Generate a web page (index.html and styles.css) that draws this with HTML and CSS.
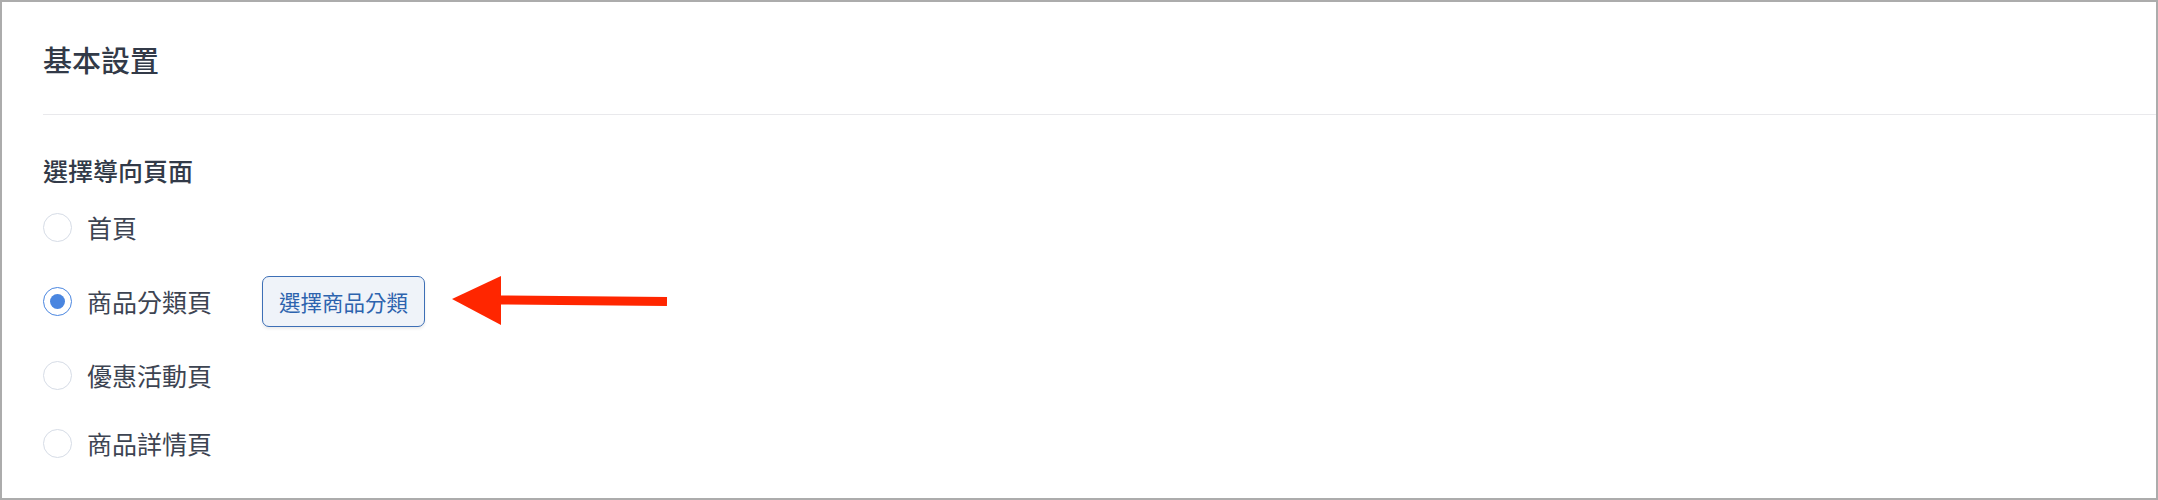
FILE: index.html
```html
<!DOCTYPE html>
<html lang="zh-Hant">
<head>
    <meta charset="UTF-8">
    <meta name="viewport" content="width=device-width, initial-scale=1.0">
    <title>基本設置</title>
    <link rel="stylesheet" href="styles.css">
</head>
<body>
    <div class="panel">
        <div class="panel-header">
            <h2>基本設置</h2>
        </div>

        <div class="panel-body">
            <div class="field-label">選擇導向頁面</div>

            <div class="radio-list">
                <label class="radio-row">
                    <span class="radio"></span>
                    <span class="radio-text">首頁</span>
                </label>
                <label class="radio-row">
                    <span class="radio checked"></span>
                    <span class="radio-text">商品分類頁</span>
                    <button class="pick-btn" type="button">選擇商品分類</button>
                </label>
                <label class="radio-row">
                    <span class="radio"></span>
                    <span class="radio-text">優惠活動頁</span>
                </label>
                <label class="radio-row">
                    <span class="radio"></span>
                    <span class="radio-text">商品詳情頁</span>
                </label>
            </div>
        </div>

        <!-- 紅色箭頭標示 -->
        <svg class="pointer" width="230" height="60" viewBox="0 0 230 60">
            <polygon points="2,27 51,4 51,53" fill="#ff2600" />
            <line x1="48" y1="28" x2="217" y2="29.5" stroke="#ff2600" stroke-width="9" />
        </svg>
    </div>
</body>
</html>
```

FILE: styles.css
```css
* {
    box-sizing: border-box;
}

body {
    margin: 0;
    font-family: "Noto Sans CJK TC", "Noto Sans", sans-serif;
    background-color: #ffffff;
    color: #333b4a;
}

.panel {
    position: relative;
    height: 500px;
    border: 2px solid #acacac;
    background-color: #ffffff;
    overflow: hidden;
}

.panel-header {
    margin-left: 41px;
    padding: 43px 0 40px;
    border-bottom: 1px solid #e9e9ec;
}

.panel-header h2 {
    margin: 0;
    font-size: 29px;
    line-height: 29px;
    font-weight: 500;
    color: #323a48;
}

.panel-body {
    padding: 43px 0 0 41px;
}

.field-label {
    font-size: 25px;
    line-height: 25px;
    font-weight: 500;
    color: #323a48;
    margin-bottom: 25px;
}

.radio-list {
    display: flex;
    flex-direction: column;
    gap: 29px;
}

.radio-row {
    display: flex;
    align-items: center;
    min-height: 39px;
    cursor: pointer;
}

.radio {
    width: 29px;
    height: 29px;
    border-radius: 50%;
    border: 1px solid #d6dce6;
    display: flex;
    justify-content: center;
    align-items: center;
    flex-shrink: 0;
}

.radio.checked {
    border-color: #4a86e0;
}

.radio.checked::after {
    content: "";
    width: 15px;
    height: 15px;
    border-radius: 50%;
    background-color: #4a86e0;
}

.radio-text {
    margin-left: 15px;
    font-size: 25px;
    line-height: 25px;
    color: #3d4452;
}

.pick-btn {
    margin-left: 50px;
    height: 51px;
    padding: 0 16px;
    font-family: inherit;
    font-size: 21.5px;
    color: #2d63ae;
    background-color: #eff3f9;
    border: 1px solid #3d6fb6;
    border-radius: 7px;
    box-shadow: 0 2px 3px rgba(0, 0, 0, 0.08);
    cursor: pointer;
}

.pointer {
    position: absolute;
    left: 448px;
    top: 270px;
}
```
